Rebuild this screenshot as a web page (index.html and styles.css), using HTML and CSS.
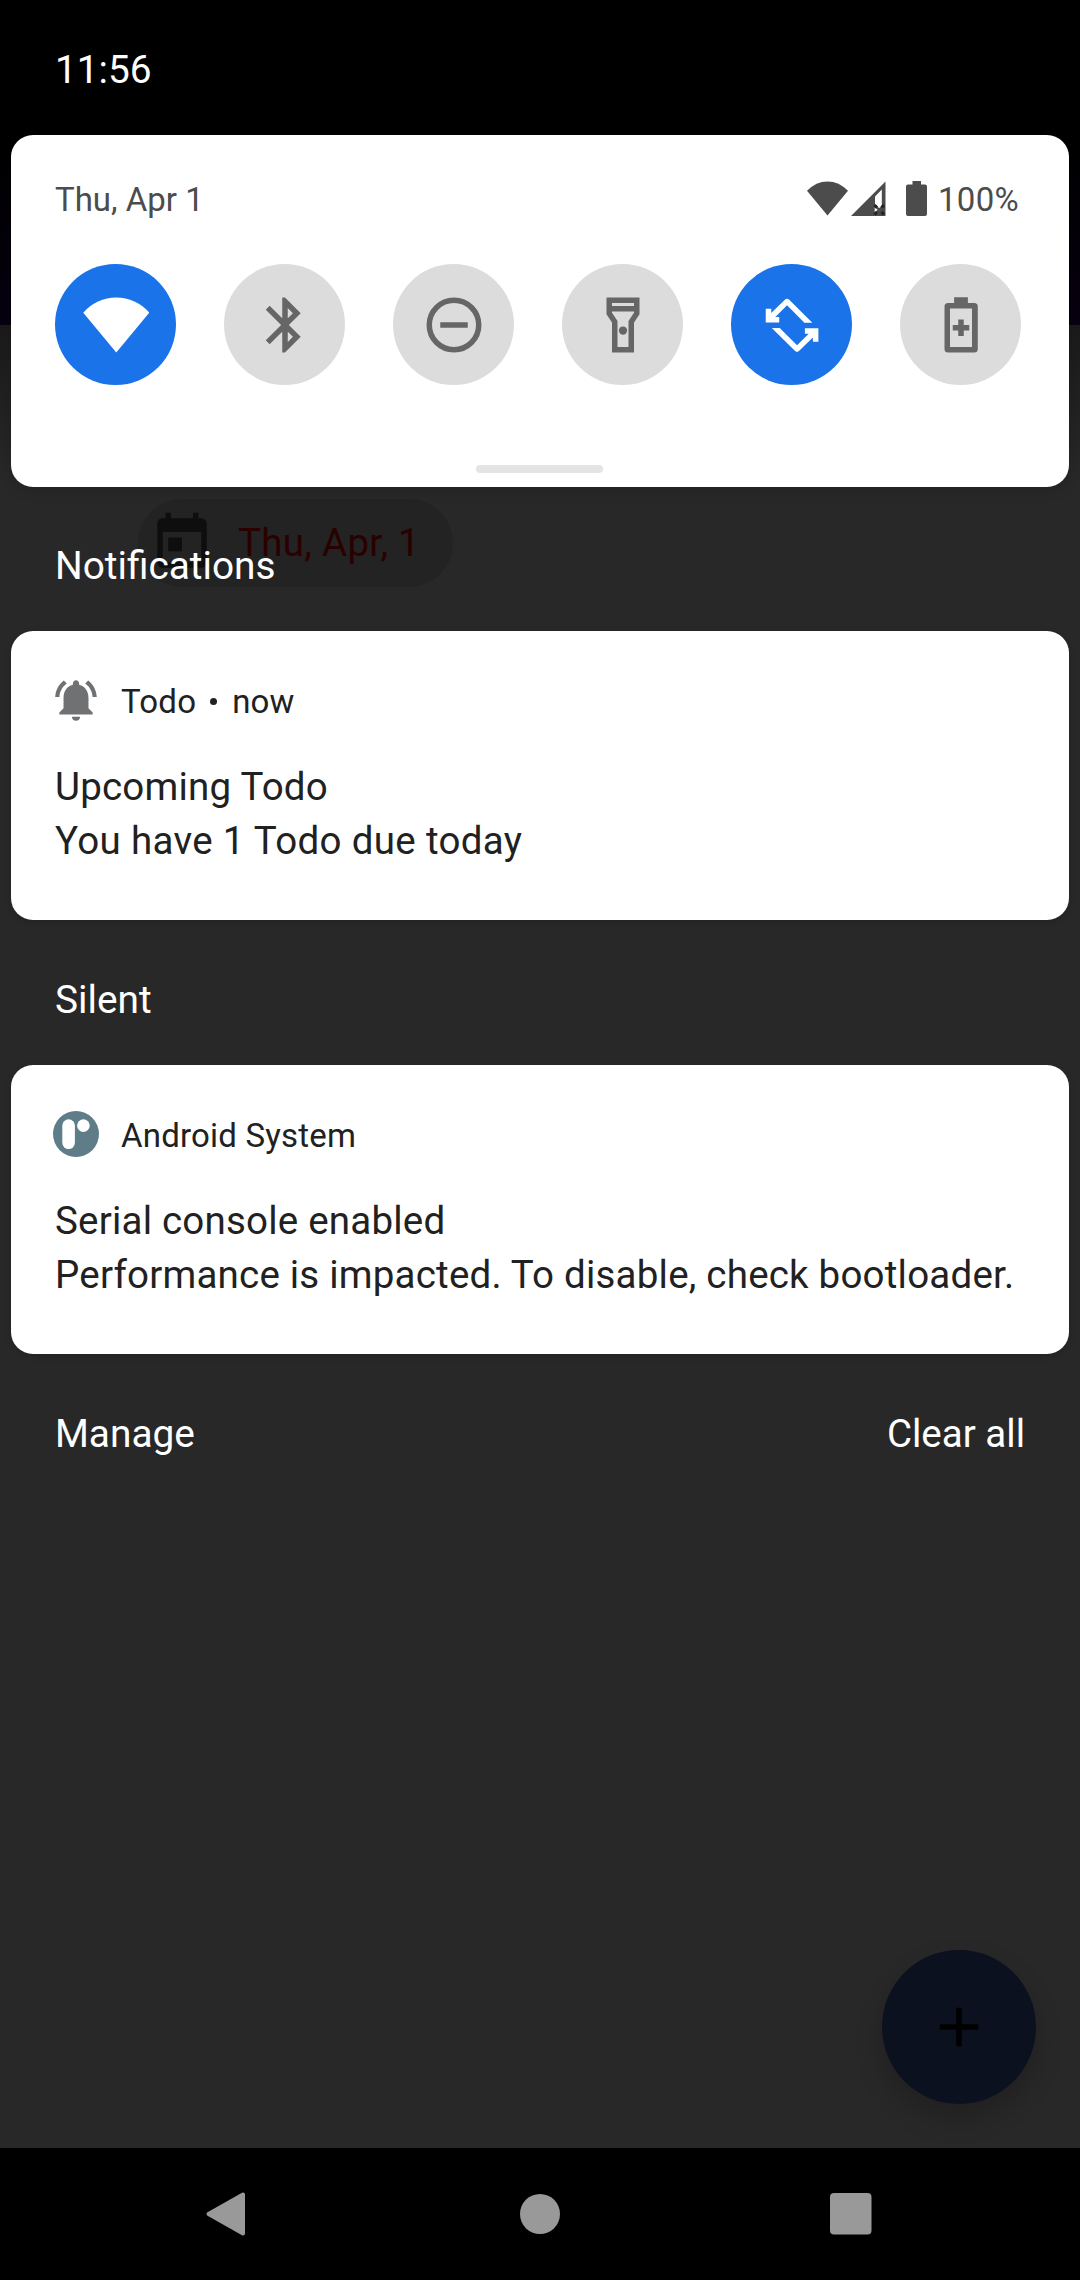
FILE: index.html
```html
<!DOCTYPE html>
<html lang="en">
<head>
<meta charset="utf-8">
<title>Notification shade</title>
<link rel="stylesheet" href="styles.css">
</head>
<body>
<div class="screen">
  <div class="app">
    <div class="chip">
      <svg class="chip-icon" viewBox="0 0 24 24"><path d="M19 3h-1V1h-2v2H8V1H6v2H5c-1.110 0-1.990.9-1.990 2L3 19c0 1.100.89 2 2 2h14c1.100 0 2-.9 2-2V5c0-1.100-.9-2-2-2zm0 16H5V8h14v11zM7 10h5v5H7z"/></svg>
      <span class="chip-text">Thu, Apr, 1</span>
    </div>
    <div class="fab"><svg viewBox="0 0 24 24"><path d="M19 13h-6v6h-2v-6H5v-2h6V5h2v6h6z"/></svg></div>
  </div>

  <div class="shade">
    <header class="statusbar">11:56</header>

    <section class="card quick">
      <div class="quick-head">
        <span>Thu, Apr 1</span>
        <div class="system">
          <svg class="s-wifi" viewBox="0 0 41 35"><path d="M20.500 34.500L0 9.800Q9 .4 20.500 .4T41 9.800z"/></svg>
          <svg class="s-cell" viewBox="0 0 35 35"><path d="M34.500 .5V35H0z"/><path class="gap" d="M30.800 8.500V25l-2.500 2-4.300-2.500V15.500z"/><path class="gap" d="M23.700 26.500l3 2.200-3 2.500z"/><path class="cross" d="M23.500 24l2.500 2.500M33 24l-2.500 2.500M23.500 33.500l2.500-2.500M33 33.500l-2.500-2.500"/></svg>
          <svg class="s-batt" viewBox="0 0 21 35"><path d="M6.500 0h8.500v3.500H19a2 2 0 0 1 2 2V33a2 2 0 0 1-2 2H2a2 2 0 0 1-2-2V5.500a2 2 0 0 1 2-2h4.500z"/></svg>
          <span>100%</span>
        </div>
      </div>
      <div class="tiles">
        <div class="tile on"><svg viewBox="0 0 24 24"><path d="M12.100 22L.1 7.500A15.800 15.800 0 0 1 24.100 7.500z"/></svg></div>
        <div class="tile"><svg viewBox="0 0 24 24"><path d="M17.710 7.710L12 2h-1v7.590L6.410 5 5 6.410 10.590 12 5 17.590 6.410 19 11 14.410V22h1l5.710-5.710-4.300-4.290 4.300-4.290zM13 5.830l1.880 1.880L13 9.590V5.830zm1.880 10.460L13 18.170v-3.760l1.880 1.880z"/></svg></div>
        <div class="tile"><svg viewBox="0 0 24 24"><circle class="line" cx="12" cy="12" r="9"/><path d="M7 11h10v2H7z"/></svg></div>
        <div class="tile"><svg viewBox="0 0 24 24"><path fill-rule="evenodd" d="M6 2h12v6.100l-2 3V22H8V11.100L6 8.100zM8 4v1.100h8V4zM8 7.100v.4l2 3V20h4v-9.500l2-3v-.4z"/><circle cx="12" cy="14" r="1.500"/></svg></div>
        <div class="tile on"><svg viewBox="0.100 0.100 24 24"><path id="turn" d="M19.500 11.250H16.600L10.300 4.900 6.050 9.150H7.450V11.150H2.550V6.200H4.550V7.750L9.500 2.900a1.150 1.150 0 0 1 1.600 0z"/><use href="#turn" transform="rotate(180 12.120 12.200)"/></svg></div>
        <div class="tile"><svg viewBox="0.100 0.100 24 24"><path fill-rule="evenodd" d="M9.600 2h5v2.100h2.300a1.300 1.300 0 0 1 1.300 1.300V20.800a1.300 1.300 0 0 1-1.300 1.300H7.400a1.300 1.300 0 0 1-1.300-1.300V5.400a1.300 1.300 0 0 1 1.300-1.300h2.200zM8.100 6.100v14h8v-14z"/><path d="M11.100 10.100h2v2h2v2h-2v2h-2v-2h-2v-2h2z"/></svg></div>
      </div>
      <div class="handle"></div>
    </section>

    <h2 class="heading">Notifications</h2>
    <article class="card note">
      <div class="note-head">
        <svg class="bell" viewBox="1.900 2 20.200 20"><path d="M7.580 4.080L6.150 2.650C3.750 4.480 2.170 7.300 2.030 10.500h2c.15-2.650 1.510-4.970 3.550-6.420zm12.390 6.420h2c-.15-3.200-1.730-6.020-4.120-7.850l-1.420 1.430c2.020 1.450 3.390 3.770 3.540 6.420zM18 11c0-3.070-1.640-5.640-4.500-6.320V4c0-.83-.67-1.500-1.500-1.500s-1.500.67-1.500 1.500v.68C7.630 5.360 6 7.920 6 11v5l-2 2v1h16v-1l-2-2v-5zm-6 11c1.100 0 2-.9 2-2h-4c0 1.100.9 2 2 2z"/></svg>
        <span>Todo</span><i class="dot"></i><span>now</span>
      </div>
      <p>Upcoming Todo</p>
      <p class="loose">You have 1 Todo due today</p>
    </article>

    <h2 class="heading">Silent</h2>
    <article class="card note">
      <div class="note-head">
        <svg class="sys" viewBox="0 0 46 46"><circle class="disc" cx="23" cy="23" r="23"/><rect class="mark" x="9.300" y="8.300" width="12.600" height="29.700" rx="6.300"/><circle class="mark" cx="30.400" cy="14.600" r="6.300"/></svg>
        <span>Android System</span>
      </div>
      <p>Serial console enabled</p>
      <p>Performance is impacted. To disable, check bootloader.</p>
    </article>

    <footer class="actions"><span>Manage</span><span class="clear">Clear all</span></footer>
  </div>

  <nav class="navbar">
    <svg viewBox="0 0 46 46"><path class="round" d="M41 3.500V42.500L6.500 23z"/></svg>
    <svg viewBox="0 0 46 46"><circle cx="25" cy="23" r="20"/></svg>
    <svg viewBox="0 0 46 46"><rect x="2" y="2" width="41.500" height="41.500" rx="4"/></svg>
  </nav>
</div>
</body>
</html>
```
FILE: styles.css
```css
* { box-sizing: border-box; margin: 0; padding: 0; }
svg { display: block; flex: none; }

body { background: #000; font-family: Roboto, "Liberation Sans", sans-serif; }

.screen {
  position: relative;
  display: flex;
  flex-direction: column;
  width: 1080px;
  height: 2280px;
  overflow: hidden;
  background: linear-gradient(#000 130px, #070010 325px, #1a1a1a 325px, #282828 480px);
}

/* Dimmed app underneath the shade */
.app { position: absolute; inset: 0; }
.chip {
  position: absolute;
  left: 138px;
  top: 499px;
  width: 315px;
  height: 88px;
  padding-left: 11px;
  border-radius: 44px;
  background: #232323;
  display: flex;
  align-items: center;
  gap: 23px;
}
.chip-icon { width: 66px; height: 66px; fill: #0e0e0e; }
.chip-text { font-size: 38.5px; letter-spacing: 0.3px; line-height: 88px; color: #2a0000; }
.fab {
  position: absolute;
  left: 882px;
  top: 1950px;
  width: 154px;
  height: 154px;
  border-radius: 50%;
  background: #0c1120;
  box-shadow: 0 14px 28px rgba(0, 0, 0, 0.2);
  display: grid;
  place-items: center;
}
.fab svg { width: 66px; height: 66px; fill: #000; }

.shade { position: relative; flex: 1; padding: 0 11px; color: #fff; }
.statusbar {
  height: 135px;
  padding-left: 44px;
  font-size: 38.8px;
  line-height: 139px;
}

.card { background: #fff; border-radius: 22px; box-shadow: 0 2px 6px rgba(0, 0, 0, 0.15); }
.quick {
  height: 352px;
  padding: 39px 48px 0 44px;
  display: flex;
  flex-direction: column;
  box-shadow: 0 3px 14px rgba(0, 0, 0, 0.15);
}
.quick-head {
  display: flex;
  justify-content: space-between;
  height: 52px;
  font-size: 33px;
  line-height: 52px;
  color: #4c4c4c;
}
.system { display: flex; align-items: center; margin-right: 2px; letter-spacing: 0.3px; }
.system svg { fill: #4c4c4c; margin-top: -3px; }
.system .s-wifi { width: 41px; height: 35px; }
.system .s-cell { width: 35px; height: 35px; margin-left: 3px; }
.system .s-cell .gap { fill: #fff; }
.s-cell .cross { stroke: #222; stroke-width: 3; }
.system .s-batt { width: 21px; height: 35px; margin-left: 20px; margin-right: 11px; }

.tiles { display: flex; justify-content: space-between; margin-top: 38px; }
.tile {
  width: 121px;
  height: 121px;
  border-radius: 50%;
  background: #dcdcdc;
  display: grid;
  place-items: center;
}
.tile svg { width: 66px; height: 66px; fill: #666; }
.tile .line { fill: none; stroke: #666; stroke-width: 2; }
.tile.on { background: #1a73e8; }
.tile.on svg { fill: #fff; }
.handle { width: 127px; height: 8px; margin: 80px 0 0 421px; border-radius: 4px; background: #e4e4e4; }

.heading {
  height: 144px;
  padding: 1px 44px 0;
  font-size: 38.8px;
  font-weight: 400;
  line-height: 155px;
}
.note + .heading { height: 145px; padding-top: 2px; }
.note { height: 289px; padding: 42px 44px 0; color: #212121; }
.note-head {
  display: flex;
  align-items: center;
  height: 56px;
  margin-bottom: 31px;
  font-size: 33px;
  line-height: 56px;
  letter-spacing: 0.2px;
}
.note-head span { padding-top: 2px; }
.bell { width: 42px; height: 42px; margin: -2px 24px 0 0; fill: #707173; }
.sys { width: 46px; height: 46px; margin: -2px 22px 0 -2px; }
.disc { fill: #5f7d88; }
.mark { fill: #fff; }
.dot { width: 7px; height: 7px; margin: 1px 15px 0 14px; border-radius: 50%; background: #212121; }
.note p { font-size: 38.5px; line-height: 54px; letter-spacing: 0.21px; white-space: nowrap; }
.note .loose { letter-spacing: 0.32px; }

.actions {
  display: flex;
  justify-content: space-between;
  padding: 1px 44px 0;
  font-size: 38.8px;
  line-height: 158px;
}
.clear { font-size: 38.5px; }

.navbar {
  position: relative;
  flex: none;
  display: flex;
  align-items: center;
  justify-content: space-between;
  height: 132px;
  padding: 0 206px 0 202px;
  background: #000;
}
.navbar svg { width: 46px; height: 46px; fill: #999; }
.round { stroke: #999; stroke-width: 4; stroke-linejoin: round; }
```
